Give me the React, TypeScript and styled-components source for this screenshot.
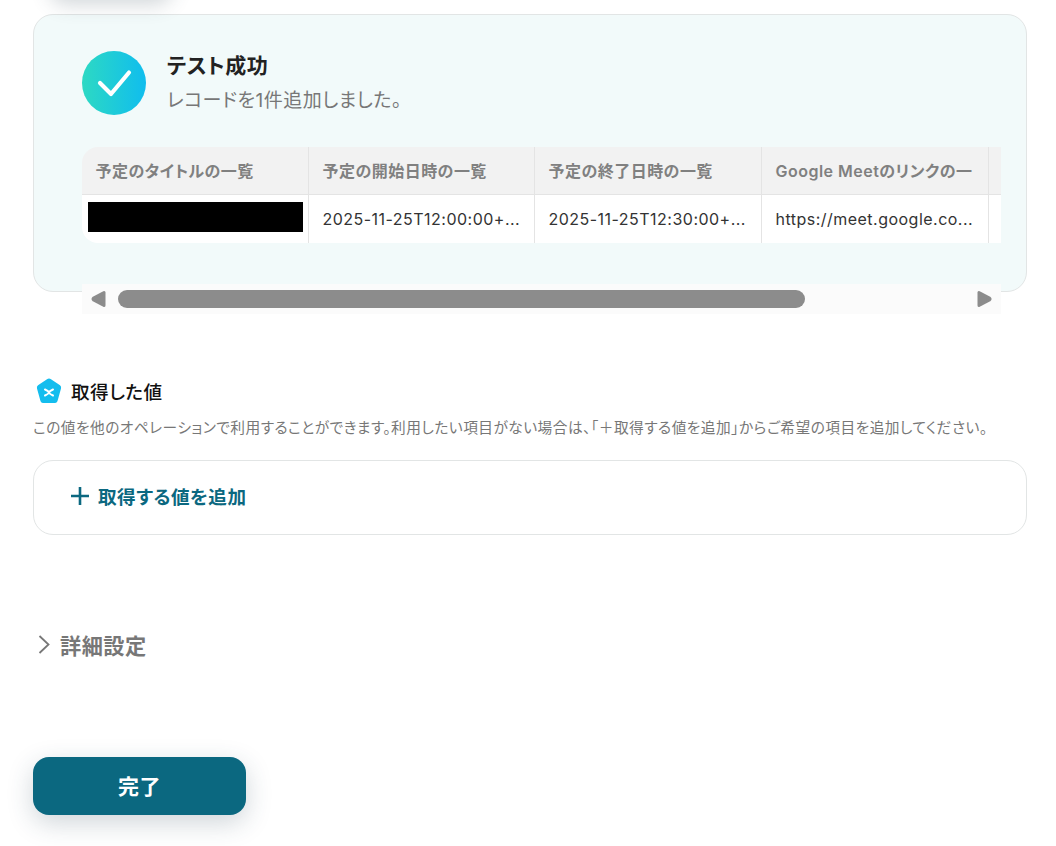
import React from 'react';
import styled, { createGlobalStyle } from 'styled-components';

const GlobalStyle = createGlobalStyle`
  html, body {
    margin: 0;
    padding: 0;
    background: #fff;
    overflow: hidden;
  }
  body {
    font-family: Inter, "Noto Sans CJK JP", "Noto Sans", sans-serif;
    font-feature-settings: "palt";
    letter-spacing: 0.03em;
    color: #222;
  }
  * { box-sizing: border-box; }
`;

const Page = styled.div`
  width: 1056px;
  height: 846px;
  padding: 14px 29px 0 33px;
  position: relative;
  overflow: hidden;
`;

const TopShadow = styled.div`
  position: absolute;
  left: 50px;
  top: -40px;
  width: 122px;
  height: 38px;
  border-radius: 16px;
  box-shadow: 0 6px 20px rgba(60, 80, 90, 0.24);
`;

const ResultCard = styled.section`
  height: 278px;
  padding: 36px 26px 0 48px;
  background: #f2fafa;
  border: 1px solid #e2e5e5;
  border-radius: 20px;
`;

const ResultHead = styled.div`
  display: flex;
  gap: 21px;
  height: 96px;
`;

const CheckCircle = styled.div`
  width: 64px;
  height: 64px;
  border-radius: 50%;
  background: linear-gradient(90deg, #2dd9c3 0%, #10bdee 100%);
  display: flex;
  align-items: center;
  justify-content: center;
`;

const ResultText = styled.div`
  display: flex;
  flex-direction: column;
`;

const ResultTitle = styled.div`
  font-size: 21px;
  font-weight: 600;
  line-height: 30px;
  color: #222;
`;

const ResultSub = styled.div`
  margin-top: 6px;
  font-size: 19px;
  line-height: 28px;
  color: #777;
`;

const ScrollArea = styled.div`
  width: 919px;
`;

const TableClip = styled.div`
  width: 919px;
  height: 96px;
  overflow: hidden;
  border-radius: 16px 0 0 16px;
`;

const Table = styled.div`
  display: grid;
  grid-template-columns: 227px 226px 227px 227px 227px;
  width: 1134px;
`;

const HeadCell = styled.div`
  height: 48px;
  padding: 0 13.5px;
  background: #f2f2f2;
  border-right: 1px solid #e4e4e4;
  border-bottom: 1px solid #e4e4e4;
  font-size: 16px;
  font-weight: 600;
  line-height: 48px;
  color: #808080;
  white-space: nowrap;
  overflow: hidden;
`;

const BodyCell = styled.div`
  height: 48px;
  padding: 0 13.5px;
  background: #fff;
  border-right: 1px solid #e4e4e4;
  font-size: 16px;
  line-height: 49px;
  color: #333;
  white-space: nowrap;
  overflow: hidden;
`;

const RedactedCell = styled(BodyCell)`
  display: flex;
  align-items: flex-start;
  padding: 7px 5px 0 6px;
`;

const Redacted = styled.div`
  width: 100%;
  height: 30px;
  background: #000;
`;

const ScrollBar = styled.div`
  margin-top: 41px;
  height: 30px;
  background: #fbfbfb;
  display: flex;
  align-items: center;
  padding: 0 9px;
  gap: 12px;
`;

const Thumb = styled.div`
  width: 687px;
  height: 18px;
  border-radius: 9px;
  background: #8c8c8c;
`;

const ArrowRight = styled.svg`
  margin-left: auto;
`;

const ValuesHead = styled.div`
  margin-top: 85px;
  display: flex;
  align-items: center;
  gap: 8px;
  height: 28px;
  padding-left: 2px;
`;

const ValuesTitle = styled.h3`
  margin: 0 0 2px;
  font-size: 18.6px;
  font-weight: 500;
  color: #111;
`;

const ValuesNote = styled.p`
  margin: 13px 0 0;
  font-size: 14.7px;
  line-height: 20px;
  color: #777;
  white-space: nowrap;
`;

const AddBox = styled.div`
  margin-top: 22px;
  height: 75px;
  border: 1px solid #e2e5e5;
  border-radius: 20px;
  display: flex;
  align-items: center;
  gap: 9px;
  padding: 0 0 3px 37px;
  background: #fff;
`;

const AddLabel = styled.span`
  margin-bottom: 1px;
  font-size: 18.6px;
  font-weight: 600;
  color: #0b6880;
`;

const Details = styled.div`
  margin-top: 92px;
  display: flex;
  align-items: center;
  gap: 9px;
  height: 34px;
  padding-left: 3px;
`;

const DetailsLabel = styled.span`
  font-size: 21.2px;
  font-weight: 600;
  color: #777;
`;

const DoneButton = styled.button`
  display: block;
  margin-top: 96px;
  width: 213px;
  height: 58px;
  padding: 0 0 2px;
  border: none;
  border-radius: 16px;
  background: #0b6880;
  color: #fff;
  font-family: inherit;
  font-feature-settings: inherit;
  letter-spacing: inherit;
  font-size: 21px;
  font-weight: 700;
  box-shadow: 0 8px 26px rgba(40, 70, 85, 0.22);
`;

const headers = ['予定のタイトルの一覧', '予定の開始日時の一覧', '予定の終了日時の一覧', 'Google Meetのリンクの一', ''];
const values = ['2025-11-25T12:00:00+...', '2025-11-25T12:30:00+...', 'https://meet.google.co...', ''];

export default function App() {
  return (
    <Page>
      <GlobalStyle />
      <TopShadow />
      <ResultCard>
        <ResultHead>
          <CheckCircle>
            <svg width="36" height="30" viewBox="0 0 36 30" fill="none">
              <path d="M4 15 L15 26 L33 4.5" stroke="#fff" strokeWidth="4.2" strokeLinecap="round" strokeLinejoin="round" />
            </svg>
          </CheckCircle>
          <ResultText>
            <ResultTitle>テスト成功</ResultTitle>
            <ResultSub>レコードを1件追加しました。</ResultSub>
          </ResultText>
        </ResultHead>
        <ScrollArea>
          <TableClip>
            <Table>
              {headers.map((h, i) => (
                <HeadCell key={i}>{h}</HeadCell>
              ))}
              <RedactedCell>
                <Redacted />
              </RedactedCell>
              {values.map((v, i) => (
                <BodyCell key={i}>{v}</BodyCell>
              ))}
            </Table>
          </TableClip>
          <ScrollBar>
            <svg width="15" height="18" viewBox="0 0 15 18">
              <path d="M13 2.5 V15.5 L2.5 10 Q1.5 9 2.5 8 Z" fill="#8c8c8c" stroke="#8c8c8c" strokeWidth="3" strokeLinejoin="round" />
            </svg>
            <Thumb />
            <ArrowRight width="15" height="18" viewBox="0 0 15 18">
              <path d="M2 2.5 V15.5 L12.5 10 Q13.5 9 12.5 8 Z" fill="#8c8c8c" stroke="#8c8c8c" strokeWidth="3" strokeLinejoin="round" />
            </ArrowRight>
          </ScrollBar>
        </ScrollArea>
      </ResultCard>

      <ValuesHead>
        <svg width="28" height="28" viewBox="0 0 28 28">
          <path d="M12 2.2 Q14 1 16 2.2 L25 8.2 Q26.6 9.4 26 11.4 L22.8 23 Q22.2 26 20 26 H8 Q5.8 26 5.2 23 L2 11.4 Q1.4 9.4 3 8.2 Z" fill="#14bdee" />
          <path d="M10 12.5 Q13.5 14 14 15.5 Q13.5 17 10 18.5 M18 12.5 Q14.5 14 14 15.5 Q14.5 17 18 18.5" stroke="#fff" strokeWidth="2" fill="none" strokeLinecap="round" />
        </svg>
        <ValuesTitle>取得した値</ValuesTitle>
      </ValuesHead>
      <ValuesNote>この値を他のオペレーションで利用することができます。利用したい項目がない場合は、「＋取得する値を追加」からご希望の項目を追加してください。</ValuesNote>
      <AddBox>
        <svg width="18" height="18" viewBox="0 0 18 18">
          <path d="M9 0 V18 M0 9 H18" stroke="#0b6880" strokeWidth="2.6" />
        </svg>
        <AddLabel>取得する値を追加</AddLabel>
      </AddBox>

      <Details>
        <svg width="15" height="20" viewBox="0 0 15 20" fill="none">
          <path d="M3.5 2 L12.5 10.5 L3.5 19" stroke="#777" strokeWidth="1.8" />
        </svg>
        <DetailsLabel>詳細設定</DetailsLabel>
      </Details>

      <DoneButton>完了</DoneButton>
    </Page>
  );
}
